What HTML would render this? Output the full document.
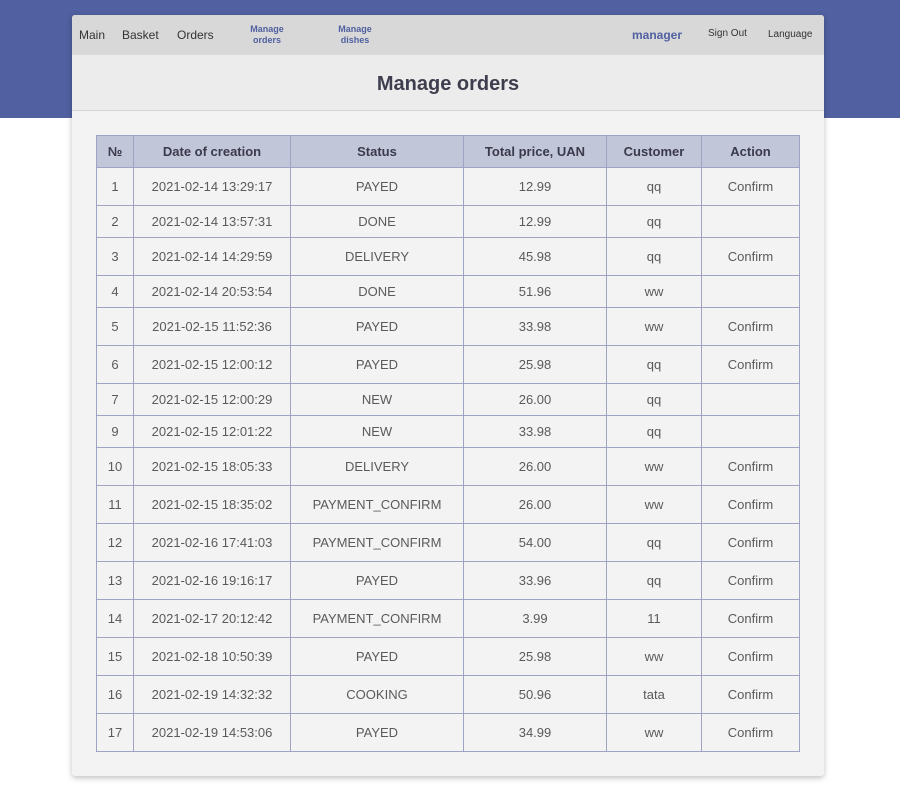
<!DOCTYPE html>
<html><head><meta charset="utf-8"><style>
*{margin:0;padding:0;box-sizing:border-box}
body{width:900px;height:797px;background:#fff;font-family:"Liberation Sans",sans-serif;color:#444;position:relative;overflow:hidden}
.band{position:absolute;left:0;top:0;width:900px;height:118px;background:#5060a0}
.card{position:absolute;left:72px;top:15px;width:752px;height:761px;background:#f3f3f3;border-radius:3px;box-shadow:0 2px 6px rgba(0,0,0,.25);overflow:hidden}
.nav{height:40px;background:#d8d8d8;position:relative;font-size:12px;color:#333}
.nav span{position:absolute}
.hdr{height:56px;background:#ececec;border-bottom:1px solid #d4d4d4;text-align:center;font-size:20px;font-weight:bold;color:#3e3e4e;line-height:58px}
table{position:absolute;left:24px;top:120px;border-collapse:collapse;font-size:13px;color:#5a5a5a}
td,th{border:1px solid #a0a4c4;text-align:center;padding:0}
th{background:#c1c7d9;height:32px;color:#3a3a4a;font-size:13px}
td{height:38px}
tr.s td{height:32px}
</style></head><body>
<div class="band"></div>
<div class="card">
<div class="nav">
<span style="left:7px;top:13px">Main</span>
<span style="left:50px;top:13px">Basket</span>
<span style="left:105px;top:13px">Orders</span>
<span style="left:170px;top:9px;font-size:9px;font-weight:bold;color:#5060a0;text-align:center;line-height:11px;width:50px">Manage<br>orders</span>
<span style="left:258px;top:9px;font-size:9px;font-weight:bold;color:#5060a0;text-align:center;line-height:11px;width:50px">Manage<br>dishes</span>
<span style="left:560px;top:13px;font-weight:bold;color:#5060a0">manager</span>
<span style="left:636px;top:13px;font-size:10px">Sign Out</span>
<span style="left:696px;top:14px;font-size:10px">Language</span>
</div>
<div class="hdr">Manage orders</div>
<table>
<tr><th style="width:37px">№</th><th style="width:157px">Date of creation</th><th style="width:173px">Status</th><th style="width:143px">Total price, UAN</th><th style="width:95px">Customer</th><th style="width:98px">Action</th></tr>
<tr><td>1</td><td>2021-02-14 13:29:17</td><td>PAYED</td><td>12.99</td><td>qq</td><td>Confirm</td></tr>
<tr class="s"><td>2</td><td>2021-02-14 13:57:31</td><td>DONE</td><td>12.99</td><td>qq</td><td></td></tr>
<tr><td>3</td><td>2021-02-14 14:29:59</td><td>DELIVERY</td><td>45.98</td><td>qq</td><td>Confirm</td></tr>
<tr class="s"><td>4</td><td>2021-02-14 20:53:54</td><td>DONE</td><td>51.96</td><td>ww</td><td></td></tr>
<tr><td>5</td><td>2021-02-15 11:52:36</td><td>PAYED</td><td>33.98</td><td>ww</td><td>Confirm</td></tr>
<tr><td>6</td><td>2021-02-15 12:00:12</td><td>PAYED</td><td>25.98</td><td>qq</td><td>Confirm</td></tr>
<tr class="s"><td>7</td><td>2021-02-15 12:00:29</td><td>NEW</td><td>26.00</td><td>qq</td><td></td></tr>
<tr class="s"><td>9</td><td>2021-02-15 12:01:22</td><td>NEW</td><td>33.98</td><td>qq</td><td></td></tr>
<tr><td>10</td><td>2021-02-15 18:05:33</td><td>DELIVERY</td><td>26.00</td><td>ww</td><td>Confirm</td></tr>
<tr><td>11</td><td>2021-02-15 18:35:02</td><td>PAYMENT_CONFIRM</td><td>26.00</td><td>ww</td><td>Confirm</td></tr>
<tr><td>12</td><td>2021-02-16 17:41:03</td><td>PAYMENT_CONFIRM</td><td>54.00</td><td>qq</td><td>Confirm</td></tr>
<tr><td>13</td><td>2021-02-16 19:16:17</td><td>PAYED</td><td>33.96</td><td>qq</td><td>Confirm</td></tr>
<tr><td>14</td><td>2021-02-17 20:12:42</td><td>PAYMENT_CONFIRM</td><td>3.99</td><td>11</td><td>Confirm</td></tr>
<tr><td>15</td><td>2021-02-18 10:50:39</td><td>PAYED</td><td>25.98</td><td>ww</td><td>Confirm</td></tr>
<tr><td>16</td><td>2021-02-19 14:32:32</td><td>COOKING</td><td>50.96</td><td>tata</td><td>Confirm</td></tr>
<tr><td>17</td><td>2021-02-19 14:53:06</td><td>PAYED</td><td>34.99</td><td>ww</td><td>Confirm</td></tr>
</table>
</div>
</body></html>
